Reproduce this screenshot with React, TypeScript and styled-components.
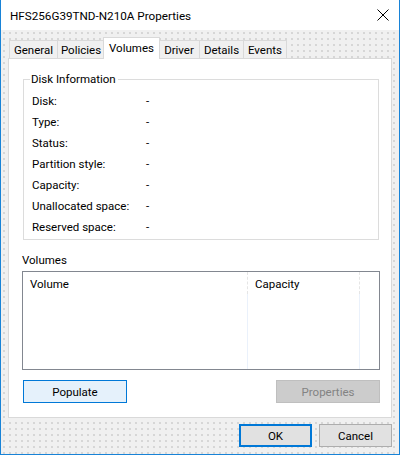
import React from "react";
import styled, { createGlobalStyle } from "styled-components";

const GlobalStyle = createGlobalStyle`
  html, body {
    margin: 0;
    padding: 0;
    background: #ffffff;
  }
  body {
    font-family: Roboto, "Liberation Sans", Arial, sans-serif;
    font-size: 11.5px;
    color: #000000;
  }
`;

const tabs = [
  { title: "General", width: 49 },
  { title: "Policies", width: 47 },
  { title: "Volumes", width: 54 },
  { title: "Driver", width: 41 },
  { title: "Details", width: 44 },
  { title: "Events", width: 43 },
];

const diskInfo = [
  "Disk:",
  "Type:",
  "Status:",
  "Partition style:",
  "Capacity:",
  "Unallocated space:",
  "Reserved space:",
];

export default function App() {
  return (
    <>
      <GlobalStyle />
      <Window>
        <TitleBar>
          <Title>HFS256G39TND-N210A Properties</Title>
          <CloseButton aria-label="Close">
            <svg width="12" height="12" viewBox="0 0 12 12">
              <path d="M0.5 0.5 L11.5 11.5 M11.5 0.5 L0.5 11.5" stroke="#000" strokeWidth="1" />
            </svg>
          </CloseButton>
        </TitleBar>
        <Body>
          <TabStrip>
            {tabs.map((t) => (
              <Tab key={t.title} $width={t.width} $active={t.title === "Volumes"}>
                {t.title}
              </Tab>
            ))}
          </TabStrip>
          <Panel>
            <GroupBox>
              <legend>Disk Information</legend>
              {diskInfo.map((label) => (
                <InfoRow key={label}>
                  <span className="label">{label}</span>
                  <span className="value">-</span>
                </InfoRow>
              ))}
            </GroupBox>
            <SectionLabel>Volumes</SectionLabel>
            <ListBox>
              <ListHeader>
                <Column $width={225}>Volume</Column>
                <Column $width={112}>Capacity</Column>
                <Column $width={0} />
              </ListHeader>
              <ListBody>
                <ColumnLine $width={225} />
                <ColumnLine $width={112} />
              </ListBody>
            </ListBox>
            <ButtonRow>
              <Button $variant="focus">Populate</Button>
              <Button $variant="disabled" disabled>
                Properties
              </Button>
            </ButtonRow>
          </Panel>
          <Footer>
            <Button $variant="default">OK</Button>
            <Button>Cancel</Button>
          </Footer>
        </Body>
      </Window>
    </>
  );
}

const Window = styled.div`
  width: 400px;
  height: 455px;
  box-sizing: border-box;
  border: 1px solid #1883d7;
  border-top: none;
  display: flex;
  flex-direction: column;
  overflow: hidden;
`;

const TitleBar = styled.div`
  height: 30px;
  flex: none;
  display: flex;
  align-items: center;
  justify-content: space-between;
  padding: 0 9px 0 9px;
  background: #ffffff;
`;

const Title = styled.div`
  font-size: 11.7px;
  color: #000;
  padding-top: 1px;
`;

const CloseButton = styled.div`
  width: 12px;
  height: 12px;
  margin-right: 1px;
  display: flex;
`;

const Body = styled.div`
  flex: 1;
  display: flex;
  flex-direction: column;
  padding: 7px 7px 0 7px;
  background-color: #f0f0f0;
  background-image: radial-gradient(circle, #d6d6d6 0.7px, transparent 0.9px);
  background-size: 6px 6px;
`;

const TabStrip = styled.div`
  display: flex;
  align-items: flex-end;
  height: 22px;
  padding-left: 1px;
  position: relative;
  z-index: 1;
`;

const Tab = styled.div<{ $active?: boolean; $width: number }>`
  box-sizing: border-box;
  width: ${(p) => (p.$active ? p.$width + 3 : p.$width)}px;
  height: ${(p) => (p.$active ? "22px" : "19px")};
  padding-top: ${(p) => (p.$active ? "2px" : "1px")};
  margin: ${(p) => (p.$active ? "0 -1px 0 -2px" : "0")};
  text-align: center;
  white-space: nowrap;
  background: ${(p) => (p.$active ? "#ffffff" : "#f0f0f0")};
  border: 1px solid #d9d9d9;
  border-bottom: ${(p) => (p.$active ? "none" : "1px solid #d9d9d9")};
  border-left-width: ${(p) => (p.$active ? "1px" : "0")};
  &:first-child {
    border-left-width: 1px;
  }
  line-height: 17px;
  color: #000;
  ${(p) => (p.$active ? "z-index: 2;" : "")}
`;

const Panel = styled.div`
  box-sizing: border-box;
  height: 360px;
  margin-top: -1px;
  background: #ffffff;
  border: 1px solid #d9d9d9;
  display: flex;
  flex-direction: column;
  padding: 13px 11px 0 13px;
`;

const GroupBox = styled.fieldset`
  margin: 0 1px 0 1px;
  padding: 4px 0 5px 8px;
  height: 168px;
  box-sizing: border-box;
  border: 1px solid #dcdcdc;
  display: flex;
  flex-direction: column;

  legend {
    padding: 0 2px 0 1px;
    margin-left: -2px;
  }
`;

const InfoRow = styled.div`
  display: flex;
  height: 21.1px;
  flex: none;
  align-items: center;
  line-height: 14px;

  .label {
    width: 114px;
  }
`;

const SectionLabel = styled.div`
  margin-top: 12px;
  height: 16px;
  line-height: 16px;
`;

const ListBox = styled.div`
  box-sizing: border-box;
  margin-top: 3px;
  height: 99px;
  width: 358px;
  border: 1px solid #828790;
  display: flex;
  flex-direction: column;
`;

const ListHeader = styled.div`
  display: flex;
  height: 22px;
`;

const Column = styled.div<{ $width: number }>`
  box-sizing: border-box;
  width: ${(p) => p.$width}px;
  flex: none;
  padding: 5px 0 0 7px;
  border-right: 1px dashed #e5e5e5;
  ${(p) => (p.$width === 0 ? "border-right: none;" : "")}
`;

const ListBody = styled.div`
  flex: 1;
  display: flex;
`;

const ColumnLine = styled.div<{ $width: number }>`
  box-sizing: border-box;
  width: ${(p) => p.$width}px;
  border-right: 1px solid #eaf1fb;
`;

const ButtonRow = styled.div`
  display: flex;
  justify-content: space-between;
  width: 358px;
  margin-top: 10px;
  padding-left: 1px;
  box-sizing: border-box;
`;

const Button = styled.button<{ $variant?: "focus" | "disabled" | "default" }>`
  box-sizing: border-box;
  width: ${(p) => (p.$variant === "default" || !p.$variant ? "73px" : "104px")};
  height: 23px;
  padding: 0;
  font-family: Roboto, "Liberation Sans", Arial, sans-serif;
  font-size: 11.5px;
  border-radius: 0;
  outline: none;
  color: ${(p) => (p.$variant === "disabled" ? "#838383" : "#000")};
  background: ${(p) =>
    p.$variant === "focus" ? "#e5f1fb" : p.$variant === "disabled" ? "#cccccc" : "#e1e1e1"};
  border: ${(p) =>
    p.$variant === "focus"
      ? "1px solid #0078d7"
      : p.$variant === "default"
      ? "2px solid #0078d7"
      : p.$variant === "disabled"
      ? "1px solid #bfbfbf"
      : "1px solid #adadad"};
`;

const Footer = styled.div`
  display: flex;
  justify-content: flex-end;
  gap: 7px;
  padding: 6px 0 0 0;
`;
